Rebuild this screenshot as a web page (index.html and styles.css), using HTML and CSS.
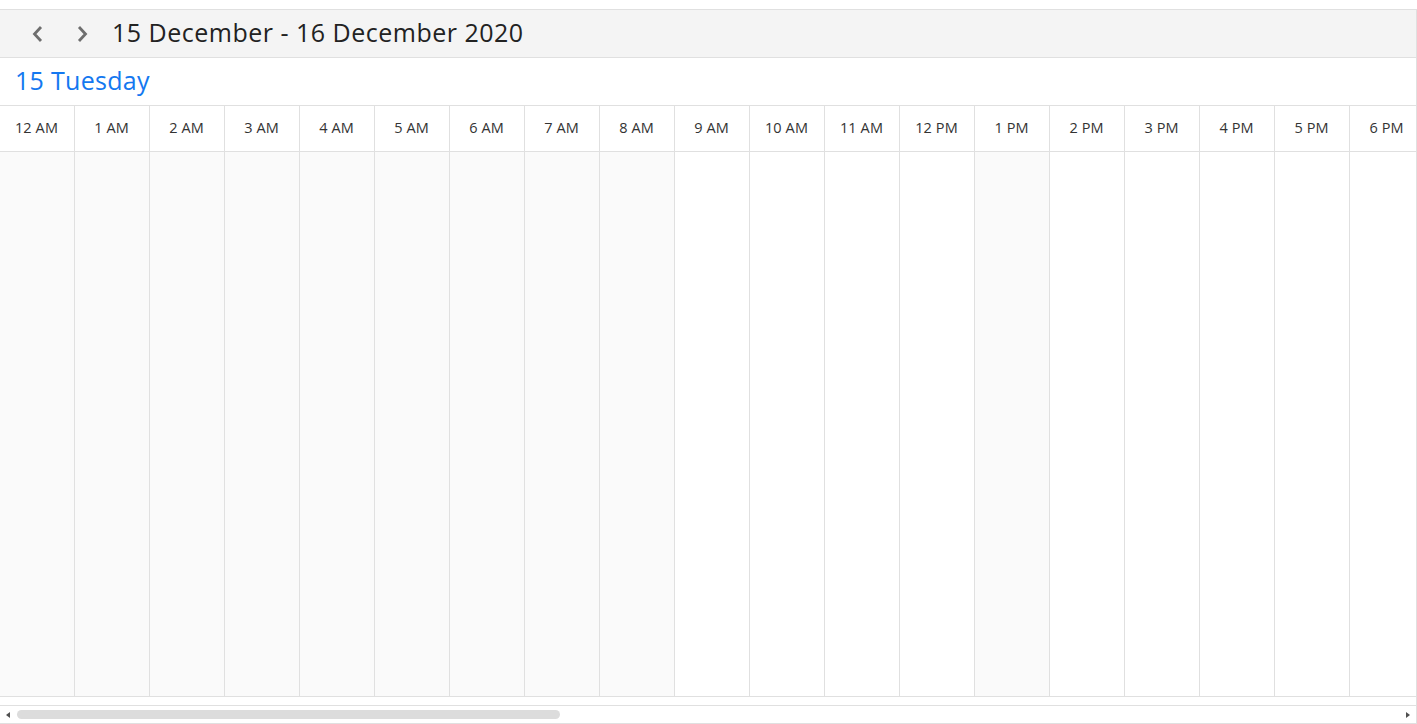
FILE: index.html
```html
<!DOCTYPE html>
<html>
<head>
<meta charset="utf-8">
<link rel="stylesheet" href="styles.css">
</head>
<body>
<div class="scheduler">
  <div class="toolbar">
    <button class="nav-btn" aria-label="Previous">
      <svg width="14" height="18" viewBox="0 0 14 18"><path d="M10 2 L3.5 9 L10 16" fill="none" stroke="#6e6e6e" stroke-width="2.8"/></svg>
    </button>
    <button class="nav-btn" aria-label="Next">
      <svg width="14" height="18" viewBox="0 0 14 18"><path d="M4 2 L10.5 9 L4 16" fill="none" stroke="#6e6e6e" stroke-width="2.8"/></svg>
    </button>
    <div class="title">15 December - 16 December 2020</div>
  </div>
  <div class="viewport">
    <div class="date-row">
      <div class="date-cell">15 Tuesday</div>
    </div>
    <div class="time-row">
      <div class="tcell">12 AM</div><div class="tcell">1 AM</div><div class="tcell">2 AM</div><div class="tcell">3 AM</div>
      <div class="tcell">4 AM</div><div class="tcell">5 AM</div><div class="tcell">6 AM</div><div class="tcell">7 AM</div>
      <div class="tcell">8 AM</div><div class="tcell">9 AM</div><div class="tcell">10 AM</div><div class="tcell">11 AM</div>
      <div class="tcell">12 PM</div><div class="tcell">1 PM</div><div class="tcell">2 PM</div><div class="tcell">3 PM</div>
      <div class="tcell">4 PM</div><div class="tcell">5 PM</div><div class="tcell">6 PM</div>
    </div>
    <div class="work-row">
      <div class="wcell off"></div><div class="wcell off"></div><div class="wcell off"></div><div class="wcell off"></div>
      <div class="wcell off"></div><div class="wcell off"></div><div class="wcell off"></div><div class="wcell off"></div>
      <div class="wcell off"></div><div class="wcell"></div><div class="wcell"></div><div class="wcell"></div>
      <div class="wcell"></div><div class="wcell off"></div><div class="wcell"></div><div class="wcell"></div>
      <div class="wcell"></div><div class="wcell"></div><div class="wcell"></div>
    </div>
  </div>
  <div class="spacer"></div>
  <div class="hscroll">
    <span class="arrow left"></span>
    <div class="track"><div class="thumb"></div></div>
    <span class="arrow right"></span>
  </div>
</div>
</body>
</html>
```
FILE: styles.css
```css
* { box-sizing: border-box; }
html, body { margin: 0; padding: 0; background: #fff; }
body {
  font-family: "Open Sans", "Noto Sans", "Liberation Sans", sans-serif;
  color: #333;
  padding-top: 9px;
}
.scheduler {
  width: 1417px;
  height: 715px;
  border: 1px solid #e0e0e0;
  border-left: none;
  display: flex;
  flex-direction: column;
  overflow: hidden;
}
.toolbar {
  height: 48px;
  background: #f4f4f4;
  border-bottom: 1px solid #e0e0e0;
  display: flex;
  align-items: center;
  padding-left: 16px;
  flex: none;
}
.nav-btn {
  border: none;
  background: transparent;
  width: 44px;
  height: 36px;
  padding: 0;
  display: flex;
  align-items: center;
  justify-content: center;
}
.title {
  font-size: 25px;
  letter-spacing: 0.5px;
  color: #222;
  margin-left: 8px;
  padding-bottom: 4px;
}
.viewport {
  flex: 1;
  overflow: hidden;
  display: flex;
  flex-direction: column;
  min-height: 0;
}
.date-row {
  height: 48px;
  border-bottom: 1px solid #e0e0e0;
  display: flex;
  flex: none;
}
.date-cell {
  font-size: 25px;
  letter-spacing: 0.3px;
  color: #1478f0;
  padding-left: 15px;
  line-height: 44px;
}
.time-row {
  display: flex;
  height: 46px;
  border-bottom: 1px solid #e0e0e0;
  flex: none;
}
.tcell {
  width: 75px;
  flex: none;
  border-right: 1px solid #e0e0e0;
  font-size: 14.5px;
  letter-spacing: 0.1px;
  display: flex;
  align-items: center;
  justify-content: center;
  padding-right: 1px;
  padding-bottom: 3px;
}
.work-row {
  display: flex;
  flex: 1;
  border-bottom: 1px solid #e0e0e0;
}
.wcell {
  width: 75px;
  flex: none;
  border-right: 1px solid #e0e0e0;
  background: #fff;
}
.wcell.off { background: #fafafa; }
.spacer { height: 8px; flex: none; }
.hscroll {
  height: 18px;
  border-top: 1px solid #e0e0e0;
  display: flex;
  align-items: center;
  flex: none;
}
.arrow {
  width: 0; height: 0;
  border-top: 3.5px solid transparent;
  border-bottom: 3.5px solid transparent;
  flex: none;
}
.arrow.left { border-right: 4px solid #505050; margin-left: 6px; }
.arrow.right { border-left: 4px solid #505050; margin-right: 6px; }
.track { flex: 1; height: 9px; margin: 0 4px 0 7px; }
.thumb {
  width: 543px;
  height: 9px;
  background: #dcdcdc;
  border-radius: 5px;
}
```
